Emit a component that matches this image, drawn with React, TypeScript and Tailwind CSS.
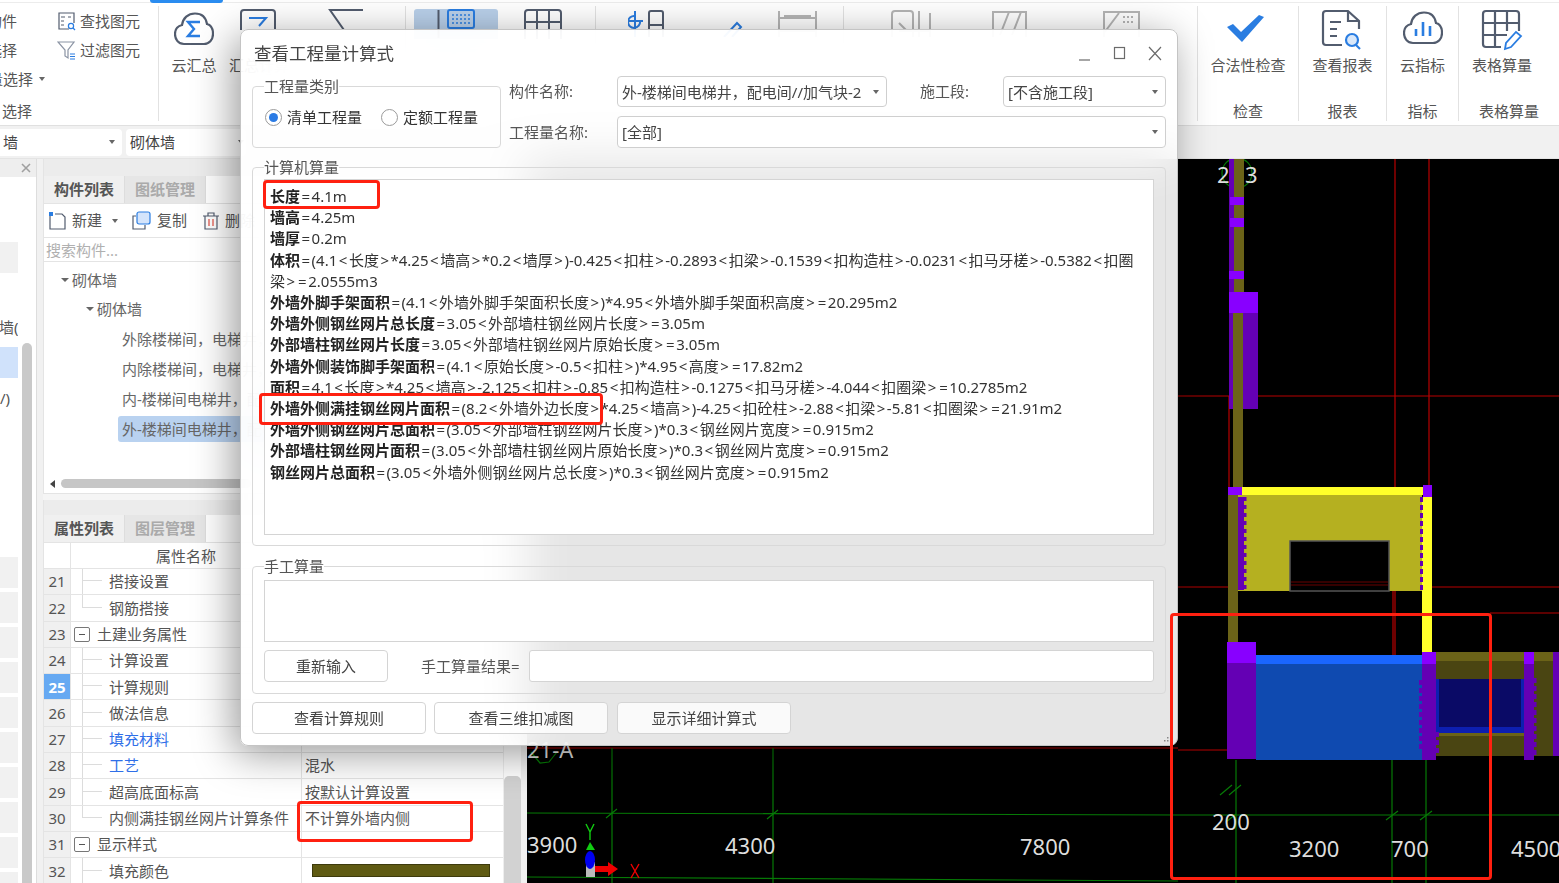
import type { ReactNode } from "react";

const Caret = ({ className = "" }: { className?: string }) => (
  <span className={`inline-block w-0 h-0 border-x-[3px] border-x-transparent border-t-[4px] border-t-[#666] ${className}`} />
);

const GroupBox = ({ title, className, children }: { title: string; className: string; children: ReactNode }) => (
  <fieldset className={`min-w-0 border border-[#d9d9d9] rounded-[4px] ${className}`}>
    <legend className="ml-[11px] text-[15px] leading-[18px] text-[#555]">{title}</legend>
    {children}
  </fieldset>
);

const Select = ({ text, className }: { text: string; className: string }) => (
  <div className={`flex items-center justify-between pl-[4px] pr-[7px] bg-white border border-[#cfcfcf] rounded-[4px] text-[15px] text-[#444] ${className}`}>
    <span className="whitespace-nowrap pt-[1px]">{text}</span>
    <Caret />
  </div>
);

const DlgButton = ({ text, className }: { text: string; className: string }) => (
  <button className={`h-[32px] bg-white/80 border border-[#d4d4d4] rounded-[4px] text-[15px] text-[#444] ${className}`}>{text}</button>
);

const Radio = ({ on, text }: { on: boolean; text: string }) => (
  <div className="flex items-center gap-[5px]">
    <span className="w-[17px] h-[17px] rounded-full border border-[#9a9a9a] bg-white flex items-center justify-center">
      {on && <span className="w-[9px] h-[9px] rounded-full bg-[#2b7be4]" />}
    </span>
    <span className="text-[15px] text-[#333]">{text}</span>
  </div>
);

const formulas: [string, string][] = [
  ["长度", "=4.1m"],
  ["墙高", "=4.25m"],
  ["墙厚", "=0.2m"],
  ["体积", "=(4.1<长度>*4.25<墙高>*0.2<墙厚>)-0.425<扣柱>-0.2893<扣梁>-0.1539<扣构造柱>-0.0231<扣马牙槎>-0.5382<扣圈\n梁>=2.0555m3"],
  ["外墙外脚手架面积", "=(4.1<外墙外脚手架面积长度>)*4.95<外墙外脚手架面积高度>=20.295m2"],
  ["外墙外侧钢丝网片总长度", "=3.05<外部墙柱钢丝网片长度>=3.05m"],
  ["外部墙柱钢丝网片长度", "=3.05<外部墙柱钢丝网片原始长度>=3.05m"],
  ["外墙外侧装饰脚手架面积", "=(4.1<原始长度>-0.5<扣柱>)*4.95<高度>=17.82m2"],
  ["面积", "=4.1<长度>*4.25<墙高>-2.125<扣柱>-0.85<扣构造柱>-0.1275<扣马牙槎>-4.044<扣圈梁>=10.2785m2"],
  ["外墙外侧满挂钢丝网片面积", "=(8.2<外墙外边长度>*4.25<墙高>)-4.25<扣砼柱>-2.88<扣梁>-5.81<扣圈梁>=21.91m2"],
  ["外墙外侧钢丝网片总面积", "=(3.05<外部墙柱钢丝网片长度>)*0.3<钢丝网片宽度>=0.915m2"],
  ["外部墙柱钢丝网片面积", "=(3.05<外部墙柱钢丝网片原始长度>)*0.3<钢丝网片宽度>=0.915m2"],
  ["钢丝网片总面积", "=(3.05<外墙外侧钢丝网片总长度>)*0.3<钢丝网片宽度>=0.915m2"],
];

// the < > = signs sit wider apart in the original font
const spaced = (rest: string) =>
  rest.split(/([<>=])/).map((part, i) =>
    /^[<>=]$/.test(part) ? (
      <span key={i} className="mx-[1.5px]">
        {part}
      </span>
    ) : (
      part
    )
  );

const Dialog = () => (
  <div className="absolute left-[240px] top-[29px] w-[938px] h-[717px] z-10 rounded-[8px] border border-[#c4c4c4] bg-white/90 backdrop-blur-xl shadow-[-6px_8px_40px_rgba(0,0,0,0.4)] px-[11px]">
    <div className="h-[46px] flex items-center justify-between">
      <span className="ml-[2px] text-[17.5px] text-[#444]">查看工程量计算式</span>
      <svg width="90" height="16" viewBox="0 0 90 16" fill="none" stroke="#6b6b6b" strokeWidth="1.2" className="mr-[2px] mt-[2px]">
        <path d="M5 14h11" />
        <rect x="40.5" y="1.5" width="10" height="11" />
        <path d="M75 1l12 13M87 1L75 14" />
      </svg>
    </div>
    <div className="h-[72px] flex">
      <GroupBox title="工程量类别" className="w-[249px] h-[71px] mt-[1px]">
        <div className="flex gap-[19px] pl-[12px] pt-[11px]">
          <Radio on text="清单工程量" />
          <Radio on={false} text="定额工程量" />
        </div>
      </GroupBox>
      <div className="ml-[8px] flex-1 flex flex-col gap-[9px] text-[15px] text-[#555]">
        <div className="h-[31px] flex items-center">
          <span className="w-[108px]">构件名称:</span>
          <Select text="外-楼梯间电梯井，配电间//加气块-2" className="w-[270px] h-[31px]" />
          <span className="ml-[33px] w-[83px]">施工段:</span>
          <Select text="[不含施工段]" className="w-[163px] h-[31px]" />
        </div>
        <div className="h-[32px] flex items-center">
          <span className="w-[108px]">工程量名称:</span>
          <Select text="[全部]" className="w-[549px] h-[32px]" />
        </div>
      </div>
    </div>
    <GroupBox title="计算机算量" className="mt-[10px] h-[388px]">
      <div className="mx-[11px] mt-[3px] h-[356px] bg-white border border-[#d4d4d4] pl-[5px] pt-[6px] text-[15px] leading-[21.2px] text-[#333] whitespace-pre overflow-hidden">
        {formulas.map(([name, rest]) => (
          <div key={name}>
            <span className="font-bold text-[#222]">{name}</span>
            {spaced(rest)}
          </div>
        ))}
      </div>
    </GroupBox>
    <GroupBox title="手工算量" className="mt-[11px] h-[137px]">
      <div className="mx-[11px] mt-[5px] h-[62px] bg-white border border-[#d4d4d4]" />
      <div className="mx-[11px] mt-[8px] flex items-center">
        <DlgButton text="重新输入" className="w-[124px]" />
        <span className="ml-[33px] w-[108px] text-[15px] text-[#555] whitespace-nowrap">手工算量结果=</span>
        <div className="w-[625px] h-[32px] bg-white border border-[#d4d4d4] rounded-[3px]" />
      </div>
    </GroupBox>
    <div className="mt-[8px] flex gap-[8px]">
      <DlgButton text="查看计算规则" className="w-[174px]" />
      <DlgButton text="查看三维扣减图" className="w-[174px]" />
      <DlgButton text="显示详细计算式" className="w-[174px] ml-[1px]" />
    </div>
    <svg width="8" height="8" viewBox="0 0 8 8" fill="#888" className="absolute right-[5px] bottom-[3px]">
      <rect x="6" y="0" width="1.5" height="1.5" />
      <rect x="3" y="3" width="1.5" height="1.5" />
      <rect x="6" y="3" width="1.5" height="1.5" />
      <rect x="0" y="6" width="1.5" height="1.5" />
      <rect x="3" y="6" width="1.5" height="1.5" />
      <rect x="6" y="6" width="1.5" height="1.5" />
    </svg>
  </div>
);

const slate = "#525c6e";
const blue = "#2a7de1";
const gray = "#b5b5b5";

const RibbonLabel = ({ text }: { text: string }) => (
  <div className="mt-auto h-[20px] text-center text-[15px] leading-[20px] text-[#555] whitespace-nowrap">{text}</div>
);

const ToolColumn = ({ w, icon, text }: { w: string; icon: ReactNode; text: string }) => (
  <div className={`${w} flex flex-col items-center`}>
    <div className="h-[48px] flex items-center justify-center">{icon}</div>
    <div className="mt-[1px] text-[15px] leading-[20px] text-[#555] whitespace-nowrap">{text}</div>
  </div>
);

const cloud = "M10 32C4 32 1 27 1 22C1 17 4 14 8 13C9 6 14 1.5 21 1.5C28 1.5 32 6 33 12C37 13 39 17 39 22C39 28 35 32 30 32Z";

const Ribbon = () => (
  <div className="h-[126px] shrink-0 bg-white border-b border-[#e0e0e0]">
    <div className="h-[3px] border-b border-[#ececec]">
      <div className="ml-[150px] w-[73px] h-[3px] bg-[#2a8cf0] rounded-b-[3px]" />
    </div>
    <div className="h-[115px] flex items-stretch mt-[3px]">
      {/* 选择 */}
      <div className="w-[159px] border-r border-[#e2e2e2] overflow-hidden flex">
        <div className="w-[57px] flex flex-col text-[15px] text-[#555] pt-[1px]">
          <div className="h-[29px] leading-[29px] -ml-[13px] whitespace-nowrap">构件</div>
          <div className="h-[29px] leading-[29px] -ml-[13px] whitespace-nowrap">选择</div>
          <div className="h-[28px] leading-[28px] -ml-[27px] whitespace-nowrap flex items-center gap-[6px]">
            批量选择 <Caret />
          </div>
          <div className="mt-[8px] h-[20px] leading-[20px] ml-[2px] whitespace-nowrap">选择</div>
        </div>
        <div className="flex flex-col text-[15px] text-[#555] pt-[1px]">
          <div className="h-[29px] flex items-center gap-[4px]">
            <svg width="19" height="19" viewBox="0 0 19 19" fill="none" stroke={slate} strokeWidth="1.2">
              <path d="M12 17H2V1h15v10" />
              <path d="M4 5h4M4 9h3M4 13h3M11 5h3" />
              <circle cx="14" cy="14" r="2.6" stroke={blue} />
              <path d="M16 16l2 2" stroke={blue} />
            </svg>
            <span>查找图元</span>
          </div>
          <div className="h-[29px] flex items-center gap-[4px]">
            <svg width="19" height="19" viewBox="0 0 19 19" fill="none" stroke={slate} strokeWidth="1.2">
              <path d="M1 1h16l-6 8v8l-3-2V9z" stroke="#8a93a3" />
              <path d="M13 13h5M13 15.5h5M13 18h5" stroke={blue} />
            </svg>
            <span>过滤图元</span>
          </div>
        </div>
      </div>
      {/* 汇总 */}
      <div className="w-[247px] border-r border-[#e2e2e2] flex pl-[13px]">
        <ToolColumn
          w="w-[44px]"
          text="云汇总"
          icon={
            <svg width="40" height="34" viewBox="0 0 40 34" fill="none" className="mb-[2px]">
              <path d={cloud} stroke={slate} strokeWidth="2.2" />
              <path d="M26 10H14l6 7-6 7h12" stroke={blue} strokeWidth="2.4" />
            </svg>
          }
        />
        <div className="ml-[13px] flex flex-col">
          <div className="h-[48px]" />
          <div className="mt-[1px] text-[15px] leading-[20px] text-[#555] whitespace-nowrap">汇总计算</div>
        </div>
        <svg width="170" height="24" viewBox="0 0 170 24" fill="none" className="mt-[0px] -ml-[89px]" strokeWidth="2">
          <rect x="41" y="4" width="34" height="34" rx="3" stroke={slate} />
          <path d="M49 12h17l-7 8" stroke={blue} />
          <path d="M163 4H130l14 20" stroke={slate} />
        </svg>
      </div>
      {/* 绘图 */}
      <div className="w-[190px] border-r border-[#e2e2e2] pl-[8px] pt-[3px]">
        <svg width="170" height="30" viewBox="0 0 170 30" fill="none" strokeWidth="2">
          <rect x="0" y="0" width="84" height="34" rx="3" fill="#b9d0ea" />
          <path d="M24.5 1v28" stroke={slate} />
          <rect x="34" y="1" width="26" height="18" rx="2" stroke={blue} />
          <path d="M38 6h18M38 10h18M38 14h18" stroke={blue} strokeDasharray="2 2" strokeWidth="1.6" />
          <path d="M111 30V4a3 3 0 0 1 3-3h30a3 3 0 0 1 3 3v26M111 13h36M123 1v29M135 1v29" stroke={slate} />
        </svg>
      </div>
      {/* 识别 */}
      <div className="w-[248px] border-r border-[#e2e2e2] pl-[32px] pt-[1px]">
        <svg width="200" height="30" viewBox="0 0 200 30" fill="none" strokeWidth="2">
          <path d="M12 14a6 6 0 1 1-5-5M7 4v26M1 14h14" stroke={blue} />
          <path d="M21 30V6a2 2 0 0 1 2-2h10a2 2 0 0 1 2 2v24M21 18h14" stroke={slate} />
          <path d="M96 30l13-14 4 4-9 10" stroke={blue} />
          <path d="M151 4v26M188 4v26M151 11h37M151 24h37M156 9h27" stroke={gray} />
        </svg>
      </div>
      {/* 编辑 */}
      <div className="w-[354px] border-r border-[#e2e2e2] pl-[47px] pt-[1px]">
        <svg width="300" height="30" viewBox="0 0 300 30" fill="none" strokeWidth="2" stroke={gray}>
          <path d="M1 30V7a3 3 0 0 1 3-3h15a3 3 0 0 1 3 3v23M28 4v26M39 6v24M8 24h30M8 16l8 8" />
          <path d="M102 30V5h33v25M109 28l9-23M121 28l9-23" />
          <path d="M213 30V5h35v25M213 26l15-20" />
          <path d="M232 10h12M232 15h12" strokeDasharray="2 2" />
        </svg>
      </div>
      {/* 检查 */}
      <div className="w-[101px] border-r border-[#e2e2e2] flex flex-col items-center">
        <ToolColumn
          w="w-full"
          text="合法性检查"
          icon={
            <svg width="40" height="32" viewBox="0 0 40 32" fill={blue} className="mr-[4px] mb-[3px]">
              <path d="M1 14l15 15L38 4l-5-2-18 17-8-8z" />
            </svg>
          }
        />
        <RibbonLabel text="检查" />
      </div>
      {/* 报表 */}
      <div className="w-[88px] border-r border-[#e2e2e2] flex flex-col items-center">
        <ToolColumn
          w="w-full"
          text="查看报表"
          icon={
            <svg width="42" height="42" viewBox="0 0 42 42" fill="none" strokeWidth="2.2" className="mr-[2px]">
              <path d="M21 36H5a3 3 0 0 1-3-3V5a3 3 0 0 1 3-3h22l11 10v8" stroke={slate} />
              <path d="M27 3v9h10M9 13h11M9 20h7M9 27h7" stroke={slate} />
              <circle cx="31" cy="31" r="6" stroke={blue} fill="#d9e8fa" />
              <path d="M35 36l4 4" stroke={blue} />
            </svg>
          }
        />
        <RibbonLabel text="报表" />
      </div>
      {/* 指标 */}
      <div className="w-[72px] border-r border-[#e2e2e2] flex flex-col items-center">
        <ToolColumn
          w="w-full"
          text="云指标"
          icon={
            <svg width="40" height="34" viewBox="0 0 40 34" fill="none" className="mb-[5px]">
              <path d={cloud} stroke={slate} strokeWidth="2.2" />
              <path d="M13 18v7M20 11v14M27 15v10" stroke={blue} strokeWidth="2.6" />
            </svg>
          }
        />
        <RibbonLabel text="指标" />
      </div>
      {/* 表格算量 */}
      <div className="flex-1 flex flex-col items-center">
        <ToolColumn
          w="w-[86px] self-start"
          text="表格算量"
          icon={
            <svg width="42" height="42" viewBox="0 0 42 42" fill="none" strokeWidth="2.2">
              <path d="M20 38H5a3 3 0 0 1-3-3V5a3 3 0 0 1 3-3h30a3 3 0 0 1 3 3v17" stroke={slate} />
              <path d="M2 14h36M2 26h24M14 2v36M26 2v20" stroke={slate} />
              <path d="M24 40l1-6 10-11 5 4-10 11z" stroke={blue} strokeWidth="1.8" />
            </svg>
          }
        />
        <div className="mt-auto h-[20px] text-[15px] leading-[20px] text-[#555]">表格算量</div>
      </div>
    </div>
  </div>
);

const ComboBar = () => (
  <div className="h-[33px] shrink-0 bg-[#f1f1f1] flex items-center gap-[4px] border-b border-[#e4e4e4]">
    <div className="w-[122px] h-[27px] bg-white rounded-r-[4px] flex items-center justify-between pl-[3px] pr-[7px] text-[15px] text-[#444]">
      墙 <Caret />
    </div>
    <div className="w-[120px] h-[27px] bg-white rounded-[4px] flex items-center justify-between pl-[4px] pr-[2px] text-[15px] text-[#444]">
      砌体墙 <Caret />
    </div>
  </div>
);

const LeftStrip = () => (
  <div className="w-[37px] shrink-0 bg-white border-r border-[#dddddd] flex flex-col overflow-hidden">
    <div className="h-[18px] shrink-0 bg-[#eeeeee] flex items-center justify-end pr-[5px] text-[#999]">
      <svg width="10" height="10" viewBox="0 0 10 10" stroke="#a0a0a0" strokeWidth="1.6">
        <path d="M1 1l8 8M9 1L1 9" />
      </svg>
    </div>
    <div className="flex-1 flex min-h-0">
      <div className="w-[18px] shrink-0 flex flex-col text-[15px] text-[#555] overflow-hidden">
        <div className="h-[65px] shrink-0" />
        <div className="h-[31px] shrink-0 bg-[#f1f1f1]" />
        <div className="h-[44px] shrink-0" />
        <div className="h-[20px] shrink-0 leading-[20px] whitespace-nowrap -ml-[1px]">墙(..</div>
        <div className="h-[31px] mt-[10px] shrink-0 bg-[#d0e2fb]" />
        <div className="h-[20px] shrink-0 mt-[10px] leading-[20px]">/)</div>
        <div className="h-[149px] shrink-0" />
        {Array.from({ length: 10 }).map((_, i) => (
          <div key={i} className="h-[31px] mb-[4px] bg-[#f1f1f1] shrink-0" />
        ))}
      </div>
      <div className="ml-[4px] w-[10px] mt-[166px] bg-[#c9c9c9] rounded-t-[5px]" />
    </div>
  </div>
);

const Tab = ({ text, on }: { text: string; on: boolean }) => (
  <div
    className={`w-[81px] h-[27px] flex items-center justify-center text-[15px] border-r border-[#dddddd] ${
      on ? "bg-[#f0f0f0] text-[#555] font-bold" : "bg-[#e6e6e6] text-[#aaaaaa] font-bold"
    }`}
  >
    {text}
  </div>
);

const treeItems = ["外除楼梯间，电梯井，配电间", "内除楼梯间，电梯井，配电间", "内-楼梯间电梯井，配电间", "外-楼梯间电梯井，配电间"];

const ComponentPanel = () => (
  <div className="h-[335px] shrink-0 border border-[#e4e4e4] border-t-0 bg-white flex flex-col overflow-hidden">
    <div className="h-[17px] bg-[#ececec] shrink-0" />
    <div className="flex shrink-0 border-b border-[#e4e4e4]">
      <Tab text="构件列表" on />
      <Tab text="图纸管理" on={false} />
    </div>
    <div className="h-[34px] shrink-0 border-b border-[#e4e4e4] flex items-center pl-[4px] text-[15px] text-[#555]">
      <svg width="20" height="20" viewBox="0 0 20 20" fill="none" stroke={slate} strokeWidth="1.2">
        <path d="M2 5v13h15V6l-3-3H7" />
        <rect x="1" y="1" width="4" height="4" fill={blue} stroke="none" />
      </svg>
      <span className="ml-[4px]">新建</span>
      <Caret className="ml-[10px]" />
      <svg width="19" height="19" viewBox="0 0 19 19" fill="none" strokeWidth="1.2" className="ml-[14px]">
        <path d="M4 5H1v13h12v-4" stroke={slate} />
        <rect x="5" y="1" width="13" height="12" rx="2" fill="#d4e4fb" stroke={blue} />
      </svg>
      <span className="ml-[6px]">复制</span>
      <svg width="18" height="18" viewBox="0 0 18 18" fill="none" stroke={slate} strokeWidth="1.2" className="ml-[15px]">
        <path d="M1 4h16M6 4V1h6v3M3 4v13h12V4" />
        <path d="M7 7v7M11 7v7" stroke="#e04b3f" />
      </svg>
      <span className="ml-[5px]">删除</span>
    </div>
    <div className="h-[24px] shrink-0 border-b border-[#e4e4e4] pl-[2px] text-[15px] leading-[24px] text-[#b0b0b0]">搜索构件...</div>
    <div className="flex-1 text-[15px] text-[#666]">
      <div className="h-[36px] flex items-center gap-[3px] pl-[17px]">
        <Caret className="border-x-[4px]" />
        砌体墙
      </div>
      <div className="h-[22px] flex items-center gap-[3px] pl-[42px]">
        <Caret className="border-x-[4px]" />
        砌体墙
      </div>
      <div className="mt-[6px] flex flex-col gap-[4px] pl-[74px]">
        {treeItems.map((t, i) => (
          <div
            key={t}
            className={`h-[26px] leading-[26px] pl-[4px] whitespace-nowrap rounded-[3px] ${i === 3 ? "bg-[#b9d2f0]" : ""}`}
          >
            {t}
          </div>
        ))}
      </div>
      <div className="mt-[37px] flex items-center pl-[6px] gap-[6px]">
        <span className="w-0 h-0 border-y-[4px] border-y-transparent border-r-[5px] border-r-[#444]" />
        <div className="w-[190px] h-[9px] bg-[#c6c6c6] rounded-[5px]" />
      </div>
    </div>
  </div>
);

type Row = { n: number; name: string; kind: "leaf" | "group"; value?: string; link?: boolean; last?: boolean; swatch?: boolean };

const rows: Row[] = [
  { n: 21, name: "搭接设置", kind: "leaf" },
  { n: 22, name: "钢筋搭接", kind: "leaf", last: true },
  { n: 23, name: "土建业务属性", kind: "group" },
  { n: 24, name: "计算设置", kind: "leaf" },
  { n: 25, name: "计算规则", kind: "leaf" },
  { n: 26, name: "做法信息", kind: "leaf" },
  { n: 27, name: "填充材料", kind: "leaf", link: true },
  { n: 28, name: "工艺", kind: "leaf", link: true, value: "混水" },
  { n: 29, name: "超高底面标高", kind: "leaf", value: "按默认计算设置" },
  { n: 30, name: "内侧满挂钢丝网片计算条件", kind: "leaf", value: "不计算外墙内侧", last: true },
  { n: 31, name: "显示样式", kind: "group" },
  { n: 32, name: "填充颜色", kind: "leaf", swatch: true },
];

const PropertyPanel = () => (
  <div className="flex-1 mt-[6px] flex min-h-0">
    <div className="w-[460px] border-l border-[#e4e4e4] flex flex-col bg-white overflow-hidden">
      <div className="h-[15px] bg-[#ececec] shrink-0" />
      <div className="flex shrink-0 border-b border-[#e4e4e4]">
        <Tab text="属性列表" on />
        <Tab text="图层管理" on={false} />
      </div>
      <div className="h-[26px] shrink-0 flex border-b border-[#e4e4e4] text-[15px] text-[#555]">
        <div className="w-[27px] border-r border-[#e4e4e4]" />
        <div className="w-[231px] border-r border-[#e4e4e4] text-center leading-[26px]">属性名称</div>
      </div>
      {rows.map((r) => (
        <div key={r.n} className="h-[26.3px] shrink-0 flex border-b border-[#e4e4e4] text-[15px] text-[#555]">
          <div
            className={`w-[27px] shrink-0 flex items-center justify-center border-r border-[#e4e4e4] ${
              r.n === 25 ? "bg-[#66a9f2] text-white font-bold" : "bg-[#f0f0f0]"
            }`}
          >
            {r.n}
          </div>
          <div className="w-[231px] shrink-0 flex items-center border-r border-[#e4e4e4] whitespace-nowrap">
            {r.kind === "group" ? (
              <>
                <span className="ml-[3px] w-[16px] h-[15px] border border-[#777] rounded-[2px] flex items-center justify-center">
                  <span className="w-[6px] h-px bg-[#555]" />
                </span>
                <span className="ml-[7px]">{r.name}</span>
              </>
            ) : (
              <>
                <span className={`ml-[11px] w-[20px] border-l border-[#dcdcdc] ${r.last ? "h-1/2 self-start" : "h-full"} flex items-end`}>
                  <span className={`w-[20px] border-t border-[#dcdcdc] ${r.last ? "" : "mb-[13px]"}`} />
                </span>
                <span className={`ml-[7px] ${r.link ? "text-[#2f6fe8]" : ""}`}>{r.name}</span>
              </>
            )}
          </div>
          <div className="flex-1 flex items-center pl-[3px] whitespace-nowrap">
            {r.value}
            {r.swatch && <span className="ml-[7px] w-[178px] h-[13px] bg-[#5f5a12] border border-[#3d3a0c]" />}
          </div>
        </div>
      ))}
    </div>
    <div className="w-[18px] flex justify-center bg-white border-l border-[#eeeeee]">
      <div className="mt-[276px] w-[10px] flex-1 bg-[#d2d2d2] rounded-t-[5px]" />
    </div>
  </div>
);

const range = (from: number, to: number, step: number) => {
  const out: number[] = [];
  for (let v = from; v < to; v += step) out.push(v);
  return out;
};

const purple = "#8800ff";
const darkPurple = "#6400b4";
const olive = "#6b6318";
const darkOlive = "#4a4512";

const CadCanvas = () => (
  <div className="flex-1 bg-black min-w-0">
    <svg width="1032" height="724" viewBox="527 159 1032 724" className="block" fontFamily="'Noto Sans', sans-serif">
      <g stroke="#b80000" strokeWidth="1.2" fill="none">
        <path d="M1395 159V655M1429 159V487M1393 591V655" />
        <path d="M1178 396H1229M1258 396H1559M1229 396V487" />
        <path d="M1178 587H1228M1432 587H1559M1490 613H1559M1178 750H1227M527 748H1178" />
      </g>
      <g stroke="#067a06" strokeWidth="1.2" fill="none">
        <path d="M1236 760V883M1392 760V883M1426 760V883M612 748V883M773 748V883" />
        <path d="M527 813L1178 815H1559M527 877L1178 881" />
        <path d="M1220 795l12-10M1229 795l12-10M1226 822l10-8M1386 820l12-9M1420 820l12-9M606 818l11-9M767 819l11-9" />
        <path d="M531 752l9 11 9-1 8-10" />
        <circle cx="1237" cy="173" r="15" />
      </g>
      {/* upper column */}
      <rect x="1229" y="159" width="8" height="133" fill={darkPurple} />
      <rect x="1234" y="159" width="10" height="133" fill={olive} />
      <rect x="1230" y="197" width="14" height="8" fill={purple} />
      <rect x="1230" y="218" width="14" height="9" fill={purple} />
      <rect x="1229" y="271" width="15" height="8" fill={purple} />
      <rect x="1229" y="313" width="29" height="96" fill={darkPurple} />
      <rect x="1229" y="292" width="29" height="21" fill={purple} />
      <rect x="1233" y="313" width="10" height="174" fill={olive} />
      {/* yellow wall */}
      <rect x="1238" y="495" width="184" height="96" fill="#b5b020" />
      <rect x="1290" y="541" width="99" height="50" fill="#000" stroke="#555" strokeWidth="1.5" />
      <path d="M1291 582H1388M1291 585H1388" stroke="#6a0000" />
      <rect x="1242" y="487" width="181" height="8" fill="#ffff2a" />
      <rect x="1422" y="497" width="10" height="155" fill="#ffff2a" />
      <rect x="1228" y="495" width="10" height="147" fill={olive} />
      <rect x="1228" y="487" width="14" height="8" fill={purple} />
      <rect x="1423" y="485" width="9" height="12" fill={purple} />
      <rect x="1238" y="497" width="6" height="93" fill={darkPurple} />
      {range(497, 588, 8).map((y) => (
        <rect key={y} x="1244" y={y} width="2.5" height="4" fill={darkPurple} />
      ))}
      {range(497, 590, 8).map((y) => (
        <rect key={y} x="1420" y={y} width="3" height="5" fill={darkPurple} />
      ))}
      {/* blue wall */}
      <rect x="1256" y="655" width="166" height="9" fill="#1a66ff" />
      <rect x="1256" y="664" width="166" height="96" fill="#0f4ab0" />
      <rect x="1227" y="642" width="29" height="21" fill={purple} />
      <rect x="1227" y="663" width="29" height="96" fill={darkPurple} />
      <rect x="1436" y="652" width="123" height="9" fill={olive} />
      <rect x="1436" y="661" width="123" height="95" fill={darkOlive} />
      <rect x="1436" y="679" width="88" height="54" fill="#0d1fb0" />
      <rect x="1439" y="679" width="82" height="48" fill="#0a0a66" />
      <rect x="1436" y="733" width="88" height="3" fill={olive} />
      <rect x="1422" y="652" width="14" height="12" fill={purple} />
      <rect x="1422" y="664" width="14" height="96" fill={darkPurple} />
      {range(680, 752, 8).map((y) => (
        <rect key={y} x="1419" y={y} width="3" height="5" fill={darkPurple} />
      ))}
      {range(732, 752, 8).map((y) => (
        <rect key={y} x="1436" y={y} width="3" height="5" fill={darkPurple} />
      ))}
      <rect x="1524" y="652" width="10" height="12" fill={purple} />
      <rect x="1524" y="664" width="10" height="96" fill={darkPurple} />
      {range(678, 756, 8).map((y) => (
        <rect key={y} x="1534" y={y} width="2.5" height="5" fill={darkPurple} />
      ))}
      <rect x="1553" y="652" width="6" height="104" fill={darkPurple} />
      {/* axes */}
      <rect x="586" y="862" width="9" height="15" fill="#bbbbbb" />
      <path d="M590 842l5 8h-9z" fill="#11cc11" />
      <ellipse cx="590" cy="860" rx="5" ry="9" fill="#0000ee" />
      <path d="M595 866h13v-4l10 7-10 7v-4h-13z" fill="#ee0000" />
      <path d="M586 824l4 8 4-8M590 832v8" stroke="#11cc11" strokeWidth="1.4" fill="none" />
      <path d="M631 864l8 14M639 864l-8 14" stroke="#ee0000" strokeWidth="1.4" />
      {/* labels */}
      <g fill="#dddddd" fontSize="22">
        <text x="1217" y="183">2</text>
        <text x="1245" y="183">3</text>
        <text x="527" y="853">3900</text>
        <text x="725" y="854">4300</text>
        <text x="1020" y="855">7800</text>
        <text x="1212" y="830">200</text>
        <text x="1289" y="857">3200</text>
        <text x="1391" y="857">700</text>
        <text x="1511" y="857">4500</text>
        <text x="527" y="758">21-A</text>
      </g>
    </svg>
  </div>
);

const RedBox = ({ className }: { className: string }) => (
  <div className={`absolute z-20 border-[3px] border-[#ff2010] rounded-[4px] ${className}`} />
);

export default function App() {
  return (
    <div className="relative w-[1559px] h-[883px] overflow-hidden bg-[#f1f1f1] flex flex-col font-['Noto_Sans','Noto_Sans_CJK_SC',sans-serif] blur-[0.4px]">
      <Ribbon />
      <ComboBar />
      <div className="flex-1 flex min-h-0">
        <LeftStrip />
        <div className="w-[6px] shrink-0" />
        <div className="w-[478px] shrink-0 flex flex-col min-h-0 bg-[#f5f5f5]">
          <ComponentPanel />
          <PropertyPanel />
        </div>
        <div className="w-[6px] shrink-0" />
        <CadCanvas />
      </div>
      <Dialog />
      <RedBox className="left-[263px] top-[180px] w-[117px] h-[29px]" />
      <RedBox className="left-[259px] top-[393px] w-[344px] h-[32px]" />
      <RedBox className="left-[297px] top-[801px] w-[176px] h-[41px]" />
      <RedBox className="left-[1170px] top-[613px] w-[322px] h-[267px]" />
    </div>
  );
}
